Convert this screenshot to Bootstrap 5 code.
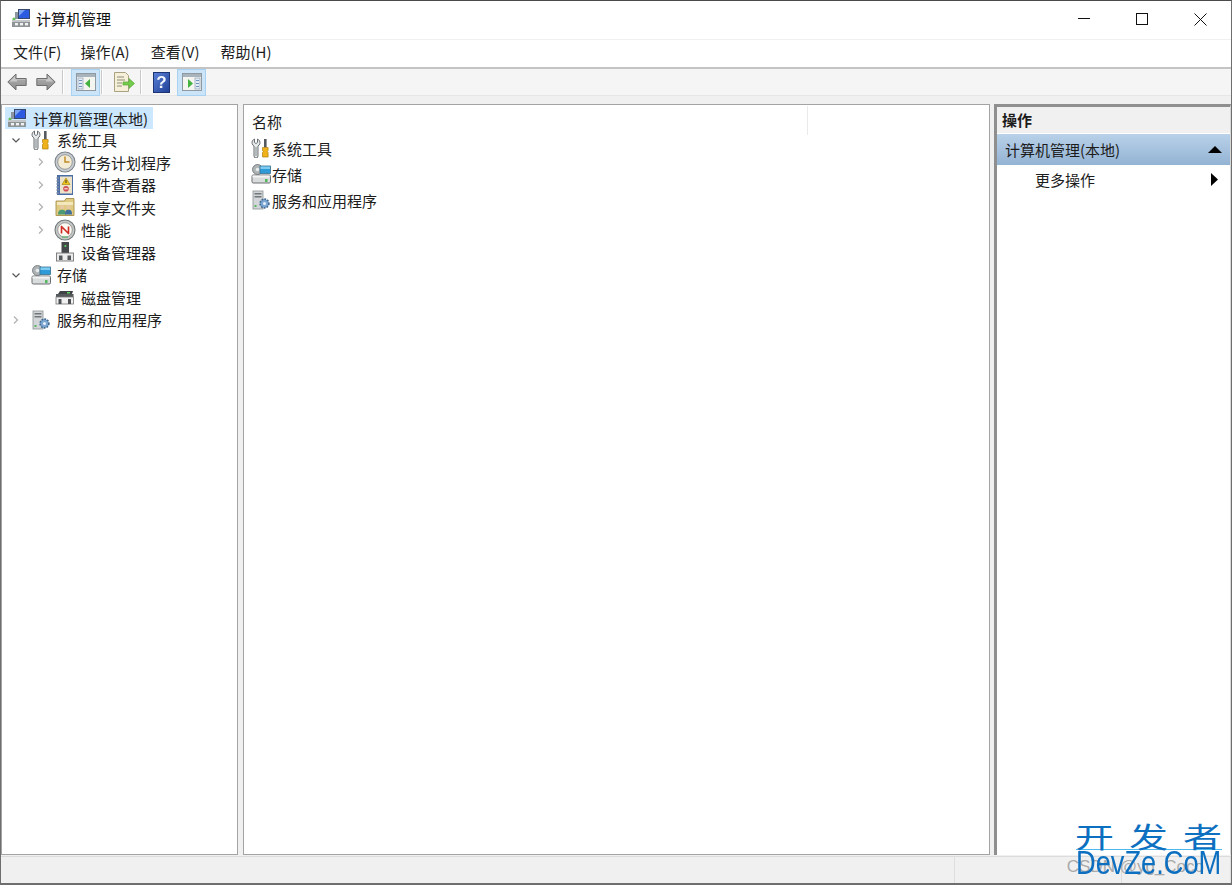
<!DOCTYPE html>
<html lang="zh">
<head>
<meta charset="utf-8">
<title>计算机管理</title>
<link rel="stylesheet" href="https://cdn.jsdelivr.net/npm/bootstrap@5.3.0/dist/css/bootstrap.min.css">
<style>
html,body{margin:0;height:100%;overflow:hidden;background:#fff}
body{font-family:"Noto Sans CJK SC","Liberation Sans",sans-serif;font-size:15px;color:#1c1c1c;line-height:1}
.mmc{width:1232px;height:885px;border:1px solid #6e6e6e;border-top-color:#4a4a4a;border-bottom-width:2px;position:relative;background:#f0f0f0}
.ic{filter:blur(.3px);flex:none}
.ttl{height:38px;background:#fff;padding:0 0 4px 10px;gap:5px;color:#111;flex:none}
.winbtns{margin-left:auto;margin-top:2px}
.winbtn{width:58px;height:34px}
.winbtn:last-child{margin-right:2px}
.menub{height:28px;background:#fff;border-top:1px solid #f0f0f0;padding:0 0 4px 12px;gap:21px;flex:none}
.menub span:first-child{margin-right:-2px}
.toolb{height:29px;background:#f5f5f5;border-top:2px solid #c4c4c4;border-bottom:1px solid #e6e6e6;padding-left:6px;flex:none}
.tbt{height:27px;width:29px}
.tbt.act{background:#cce4f7;border:1px solid #a8d2f2}
.tsep{width:2px;height:24px;background:#c9c9c9;border-right:1px solid #fff}
.m9{margin-left:9px}.m6{margin-left:6px}.m7{margin-left:7px}.m1x{margin-left:1px}.m2x{margin-left:2px}.m5{margin-left:5px}
.work{flex:1 1 0;min-height:0;padding-top:8px;gap:4px}
.pane{background:#fff;border:1px solid #a3a3a3;flex:none}
.lpane{width:237px;margin-right:1px;padding:2px 0 0 3px}
.mpane{width:747px}
.rpane{width:237px;border:0;border-left:3px solid #8f8f8f;border-top:3px solid #8f8f8f;border-right:1px solid #d8d8d8}
.tnode{height:22.5px;white-space:nowrap;padding-bottom:2px}
.twa{width:26px;padding-right:4px;flex:none;display:flex;justify-content:center}
.twb{width:25px;padding-right:2px;flex:none;display:flex;justify-content:center}
.ind{padding-left:24px}
.icg{margin-right:6px}
.icgb{margin-right:5px}
.root{background:#cce8ff;height:22px;width:148px;padding:0 0 0 2px;margin-bottom:.5px}
.hdrow{height:30px;padding-left:8px}
.hdcell{width:556px;height:29px;border-right:1px solid #eaeaea;margin-top:1px;padding-top:1px}
.lrow{height:26px;padding-left:7px;gap:1px}
.acth{height:26px;background:#f0f0f0;font-weight:700;padding:0 0 2px 5px;flex:none}
.actt{height:31px;background:linear-gradient(#b9d1e9,#93b3d3);padding:0 8px;margin-top:1px;flex:none}
.actm{height:30px;padding:0 12px 2px 38px;flex:none}
.stat{height:27px;flex:none;background:#f0f0f0;border-top:1px solid #dcdcdc;margin-top:1px}
.stc{border-right:1px solid #dedede;height:100%}
.stc-a{width:954px}.stc-b{width:167px}
.wm{position:absolute;right:9px;bottom:7px;width:146px;z-index:5}
.wm1{font-size:39px;color:#0d6fc0;letter-spacing:15px;line-height:28px;height:28px;width:162px;white-space:nowrap;transform:translateY(-3px) scaleY(.72);transform-origin:left bottom;margin-left:-1px}
.wm2{font-family:"Liberation Sans",sans-serif;font-size:33px;color:#0d6fc0;line-height:26px;border-top:1px solid #4db8ee;white-space:nowrap;width:146px}
.wm2 span{display:inline-block;transform:scaleX(.825);transform-origin:left center}
.wm3{position:absolute;right:27px;bottom:8px;font-size:17px;color:#aaa;white-space:nowrap;font-family:"Liberation Sans",sans-serif;z-index:4}
</style>
</head>
<body>
<svg width="0" height="0" class="position-absolute">
<defs>
<linearGradient id="g-arrow" x1="0" y1="0" x2="0" y2="1"><stop offset="0" stop-color="#b8b8b8"/><stop offset="1" stop-color="#8a8a8a"/></linearGradient>
<linearGradient id="g-help" x1="0" y1="0" x2="1" y2="1"><stop offset="0" stop-color="#5b82d8"/><stop offset="1" stop-color="#1f3f96"/></linearGradient>
<symbol id="i-comp" viewBox="0 0 20 20">
 <rect x="7" y="1" width="12" height="10" fill="#3a4a6a"/><rect x="8" y="2" width="10" height="8" fill="#2a5be0"/><path d="M8 2h6l-6 6z" fill="#7aa4f2"/>
 <path d="M4 4h3v7H4z" fill="#8c96a0"/><circle cx="3" cy="11" r="1.600" fill="#69c05a"/>
 <rect x="1" y="12" width="18" height="7" fill="#8f9496"/><rect x="1" y="12" width="18" height="2" fill="#c3c7c9"/><rect x="4" y="15" width="3" height="2.400" fill="#f2f2f2"/><rect x="9" y="15" width="3" height="2.400" fill="#f2f2f2"/><rect x="14" y="15" width="3" height="2.400" fill="#f2f2f2"/>
</symbol>
<symbol id="i-tools" viewBox="0 0 20 20">
 <path d="M3.500 1v3.500l1.500 1 1.500-1V1c1.800.9 2.800 2.500 2.400 4.500-.2 1.200-1 2-1.900 2.500v10a2 2 0 0 1-4 0V8C2.100 7.500 1.300 6.700 1.100 5.500.7 3.500 1.700 1.900 3.500 1z" fill="#e6e9ea" stroke="#5c6164" stroke-width=".9"/>
 <rect x="4" y="9" width="2" height="9" fill="#b4b9bc"/>
 <rect x="13" y="1" width="2.600" height="8.500" fill="#555a5e"/><path d="M11.500 9.500h5.600v3l-.8 1 .8 1V19h-5.600v-4.500l.8-1-.8-1z" fill="#f0b21a" stroke="#b07f10" stroke-width=".7"/>
</symbol>
<symbol id="i-clock" viewBox="0 0 22 22">
 <circle cx="11" cy="11" r="10" fill="#c6ccd0" stroke="#7d858a" stroke-width="1.100"/><circle cx="11" cy="11" r="7.300" fill="#f4ecd4" stroke="#8f9397" stroke-width=".9"/>
 <path d="M11 5.500V11h4.500" fill="none" stroke="#c08a2a" stroke-width="1.500"/>
</symbol>
<symbol id="i-event" viewBox="0 0 20 20">
 <rect x="2" y="0" width="16" height="20" fill="#4c6ea6"/><rect x="5" y="1.500" width="12" height="17" fill="#ece3ca"/>
 <path d="M1 3h3M1 6h3M1 9h3M1 12h3M1 15h3M1 18h3" stroke="#8e99aa" stroke-width="1"/>
 <path d="M11 3l4 6.500H7z" fill="#f0c419" stroke="#9c7c0a" stroke-width=".6"/><rect x="10.500" y="5" width="1" height="3" fill="#333"/>
 <circle cx="11" cy="13.800" r="2.800" fill="#cf4f55"/><rect x="9.300" y="13.300" width="3.400" height="1" fill="#fff"/>
</symbol>
<symbol id="i-share" viewBox="0 0 20 20">
 <path d="M1 4V18.500H19V1.500H11L9.500 4z" fill="#e0ca80" stroke="#a8904a" stroke-width=".9"/><rect x="2" y="5" width="16" height="3" fill="#f3e8bd"/>
 <circle cx="7" cy="10" r="2.300" fill="#e6c9a0"/><path d="M3 17.500c0-3.500 1.500-4.800 4-4.800s4 1.300 4 4.800z" fill="#4c9a74"/>
 <circle cx="13.500" cy="10" r="2.300" fill="#e6c9a0"/><path d="M10 17.500c0-3.500 1-4.800 3.500-4.800s3.500 1.300 3.500 4.800z" fill="#3f6f9d"/>
</symbol>
<symbol id="i-perf" viewBox="0 0 22 22">
 <circle cx="11" cy="11" r="10" fill="#c4c9c7" stroke="#73787a" stroke-width="1.100"/><circle cx="11" cy="11" r="7.300" fill="#fbf8f1" stroke="#8c8c8c" stroke-width=".8"/>
 <path d="M7 7l8 8M7.500 7.500v7M14.500 7.500v7" fill="none" stroke="#cf2a22" stroke-width="1.600"/>
 <path d="M8 18h6" stroke="#5eb36a" stroke-width="1.200"/>
</symbol>
<symbol id="i-dev" viewBox="0 0 20 20">
 <rect x="6.500" y="0" width="7.500" height="11" fill="#44484b"/><rect x="9.500" y="3" width="1.800" height="2" fill="#59c860"/>
 <rect x="1.500" y="11" width="17" height="8" fill="#ececec" stroke="#777" stroke-width=".9"/><rect x="4" y="13.500" width="3.500" height="4.500" fill="#55595c"/><rect x="12.500" y="13.500" width="3.500" height="4.500" fill="#55595c"/>
</symbol>
<symbol id="i-stor" viewBox="0 0 20 20">
 <circle cx="6.500" cy="5.500" r="5" fill="#aeb3b5" stroke="#6a6f71" stroke-width=".8"/><circle cx="6.500" cy="5.500" r="1.800" fill="#e8ebec"/>
 <rect x="9" y="2" width="10.500" height="7.500" fill="#2e9bd8" stroke="#3a6f8f" stroke-width=".8"/><rect x="9.500" y="2.500" width="9.500" height="2.500" fill="#7ecbef"/>
 <rect x="1" y="11" width="18.500" height="8" rx="1.200" fill="#d9dcdd" stroke="#6a6f71" stroke-width="1"/><rect x="1.500" y="11.500" width="17" height="2" fill="#f3f3f3"/><rect x="14" y="15" width="2.500" height="3" fill="#55b85c"/>
</symbol>
<symbol id="i-disk" viewBox="0 0 20 20">
 <path d="M3 7l2-3h13l-1 3z" fill="#3f4346"/><rect x="12" y="5" width="3" height="1.500" fill="#5ad060"/>
 <rect x="1" y="7" width="17.500" height="3" fill="#55595c"/><rect x="1" y="10" width="17.500" height="7" fill="#f0f0f0" stroke="#777" stroke-width=".8"/><rect x="3.500" y="12" width="3" height="5" fill="#4c5053"/><rect x="13" y="12" width="3" height="5" fill="#4c5053"/>
</symbol>
<symbol id="i-serv" viewBox="0 0 20 20">
 <rect x="2" y="1" width="10" height="18" fill="#d2d6d9" stroke="#8b9194" stroke-width=".8"/><rect x="3.500" y="3" width="7" height="1.500" fill="#70767a"/><rect x="3.500" y="6" width="7" height="1.500" fill="#70767a"/><rect x="3.500" y="15" width="2" height="2" fill="#59b561"/>
 <circle cx="13.500" cy="13.500" r="4.300" fill="#6b9bcb" stroke="#40678f" stroke-width="1.800" stroke-dasharray="1.700 1.100"/><circle cx="13.500" cy="13.500" r="3.500" fill="#7ba6d2"/><circle cx="13.500" cy="13.500" r="1.500" fill="#e8f1f9"/>
</symbol>
<symbol id="i-back" viewBox="0 0 20 18">
 <path d="M9 1L.8 9 9 17v-4.500h10.200v-7H9z" fill="url(#g-arrow)" stroke="#6f6f6f" stroke-width="1"/><path d="M8 3.500L2.800 8.500H10v-1.800h8.200v-.4H8z" fill="#c8c8c8"/>
</symbol>
<symbol id="i-fwd" viewBox="0 0 20 18">
 <path d="M11 1l8.200 8-8.200 8v-4.500H.8v-7H11z" fill="url(#g-arrow)" stroke="#6f6f6f" stroke-width="1"/><path d="M12 3.500l5.200 5H10V6.700H1.800v-.4H12z" fill="#c8c8c8"/>
</symbol>
<symbol id="i-pan-l" viewBox="0 0 20 18">
 <rect x=".5" y=".5" width="19" height="17" fill="#f4f4f0" stroke="#8f99a2"/><rect x="1" y="1" width="18" height="3" fill="#a9b3bb"/>
 <rect x="2" y="5" width="5" height="11" fill="#e3ebf4" stroke="#8fa3ba" stroke-width=".7"/><path d="M3 7.500h3M3 10.500h3M3 13.500h3" stroke="#6f93bb"/><path d="M14 6v9l-5-4.500z" fill="#43b23f"/>
</symbol>
<symbol id="i-pan-r" viewBox="0 0 20 18">
 <rect x=".5" y=".5" width="19" height="17" fill="#f4f4f0" stroke="#8f99a2"/><rect x="1" y="1" width="18" height="3" fill="#a9b3bb"/>
 <rect x="13" y="5" width="5" height="11" fill="#e3ebf4" stroke="#8fa3ba" stroke-width=".7"/><path d="M14 7.500h3M14 10.500h3M14 13.500h3" stroke="#6f93bb"/><path d="M6 6v9l5-4.500z" fill="#43b23f"/>
</symbol>
<symbol id="i-doc" viewBox="0 0 22 20">
 <path d="M1.500.5h11l3 3v16h-14z" fill="#f7f0d8" stroke="#a8a283"/><path d="M4 5h7M4 8h8M4 11h5M4 14h5" stroke="#8c8c7c" stroke-width="1.200"/><path d="M10 10h6V6.500l5.500 5-5.500 5V13h-6z" fill="#73cc4c" stroke="#5aa83a" stroke-width=".7"/>
</symbol>
<symbol id="i-help" viewBox="0 0 17 21">
 <rect x=".5" y=".5" width="16" height="20" fill="url(#g-help)" stroke="#1d3475"/><text x="8.500" y="16" text-anchor="middle" font-family="Liberation Sans" font-weight="700" font-size="17" fill="#f2f5fb">?</text>
</symbol>
<symbol id="i-chevd" viewBox="0 0 10 10"><path d="M1.500 3.500L5 7l3.500-3.500" fill="none" stroke="#555" stroke-width="1.200"/></symbol>
<symbol id="i-chevr" viewBox="0 0 10 10"><path d="M3 1.500L6.500 5 3 8.500" fill="none" stroke="#b0b0b0" stroke-width="1.200"/></symbol>
</defs>
</svg>

<div class="mmc d-flex flex-column">
  <div class="ttl d-flex align-items-center">
    <svg class="ic" width="20" height="20"><use href="#i-comp"/></svg>
    <span>计算机管理</span>
    <div class="winbtns d-flex">
      <div class="winbtn d-flex align-items-center justify-content-center"><svg width="12" height="12"><path d="M0 5.500h12" stroke="#111"/></svg></div>
      <div class="winbtn d-flex align-items-center justify-content-center"><svg width="12" height="12"><rect x=".5" y=".5" width="11" height="11" fill="none" stroke="#111"/></svg></div>
      <div class="winbtn d-flex align-items-center justify-content-center"><svg width="13" height="13"><path d="M.5.500l12 12M12.500.500l-12 12" stroke="#111"/></svg></div>
    </div>
  </div>
  <div class="menub d-flex align-items-center">
    <span>文件(F)</span><span>操作(A)</span><span>查看(V)</span><span>帮助(H)</span>
  </div>
  <div class="toolb d-flex align-items-center">
    <svg class="ic" width="20" height="18"><use href="#i-back"/></svg>
    <svg class="ic m9" width="20" height="18"><use href="#i-fwd"/></svg>
    <div class="tsep m6"></div>
    <div class="tbt act m7 d-flex align-items-center justify-content-center"><svg class="ic" width="20" height="18"><use href="#i-pan-l"/></svg></div>
    <div class="tsep m1x"></div>
    <div class="tbt m6 d-flex align-items-center justify-content-center"><svg class="ic" width="22" height="20"><use href="#i-doc"/></svg></div>
    <div class="tsep m2x"></div>
    <div class="tbt m5 d-flex align-items-center justify-content-center"><svg class="ic" width="17" height="21"><use href="#i-help"/></svg></div>
    <div class="tbt act m1x d-flex align-items-center justify-content-center"><svg class="ic" width="20" height="18"><use href="#i-pan-r"/></svg></div>
  </div>
  <div class="work d-flex">
    <div class="pane lpane">
      <div class="root tnode d-flex align-items-center"><svg class="ic icg" width="20" height="20"><use href="#i-comp"/></svg><span>计算机管理(本地)</span></div>
      <div class="tnode d-flex align-items-center"><div class="twa"><svg width="10" height="10"><use href="#i-chevd"/></svg></div><svg class="ic icg" width="20" height="20"><use href="#i-tools"/></svg>系统工具</div>
      <div class="tnode ind d-flex align-items-center"><div class="twb"><svg width="10" height="10"><use href="#i-chevr"/></svg></div><svg class="ic icgb" width="22" height="22"><use href="#i-clock"/></svg>任务计划程序</div>
      <div class="tnode ind d-flex align-items-center"><div class="twb"><svg width="10" height="10"><use href="#i-chevr"/></svg></div><svg class="ic icgb" width="22" height="20"><use href="#i-event"/></svg>事件查看器</div>
      <div class="tnode ind d-flex align-items-center"><div class="twb"><svg width="10" height="10"><use href="#i-chevr"/></svg></div><svg class="ic icgb" width="22" height="20"><use href="#i-share"/></svg>共享文件夹</div>
      <div class="tnode ind d-flex align-items-center"><div class="twb"><svg width="10" height="10"><use href="#i-chevr"/></svg></div><svg class="ic icgb" width="22" height="22"><use href="#i-perf"/></svg>性能</div>
      <div class="tnode ind d-flex align-items-center"><div class="twb"></div><svg class="ic icgb" width="22" height="20"><use href="#i-dev"/></svg>设备管理器</div>
      <div class="tnode d-flex align-items-center"><div class="twa"><svg width="10" height="10"><use href="#i-chevd"/></svg></div><svg class="ic icg" width="20" height="20"><use href="#i-stor"/></svg>存储</div>
      <div class="tnode ind d-flex align-items-center"><div class="twb"></div><svg class="ic icgb" width="22" height="20"><use href="#i-disk"/></svg>磁盘管理</div>
      <div class="tnode d-flex align-items-center"><div class="twa"><svg width="10" height="10"><use href="#i-chevr"/></svg></div><svg class="ic icg" width="20" height="20"><use href="#i-serv"/></svg>服务和应用程序</div>
    </div>
    <div class="pane mpane">
      <div class="hdrow d-flex"><div class="hdcell d-flex align-items-center">名称</div></div>
      <div class="lrow d-flex align-items-center"><svg class="ic" width="20" height="20"><use href="#i-tools"/></svg>系统工具</div>
      <div class="lrow d-flex align-items-center"><svg class="ic" width="20" height="20"><use href="#i-stor"/></svg>存储</div>
      <div class="lrow d-flex align-items-center"><svg class="ic" width="20" height="20"><use href="#i-serv"/></svg>服务和应用程序</div>
    </div>
    <div class="pane rpane d-flex flex-column">
      <div class="acth d-flex align-items-center">操作</div>
      <div class="actt d-flex align-items-center justify-content-between"><span>计算机管理(本地)</span><svg width="14" height="7"><path d="M7 0l7 7H0z" fill="#000"/></svg></div>
      <div class="actm d-flex align-items-center justify-content-between"><span>更多操作</span><svg width="7" height="13"><path d="M0 0l7 6.500L0 13z" fill="#000"/></svg></div>
    </div>
  </div>
  <div class="stat d-flex">
    <div class="stc stc-a"></div>
    <div class="stc stc-b"></div>
    <div class="stc flex-fill"></div>
  </div>
  <div class="wm3">CSDN @yg_Coco</div>
  <div class="wm">
    <div class="wm1">开发者</div>
    <div class="wm2"><span>DevZe.CoM</span></div>
  </div>
</div>
</body>
</html>
